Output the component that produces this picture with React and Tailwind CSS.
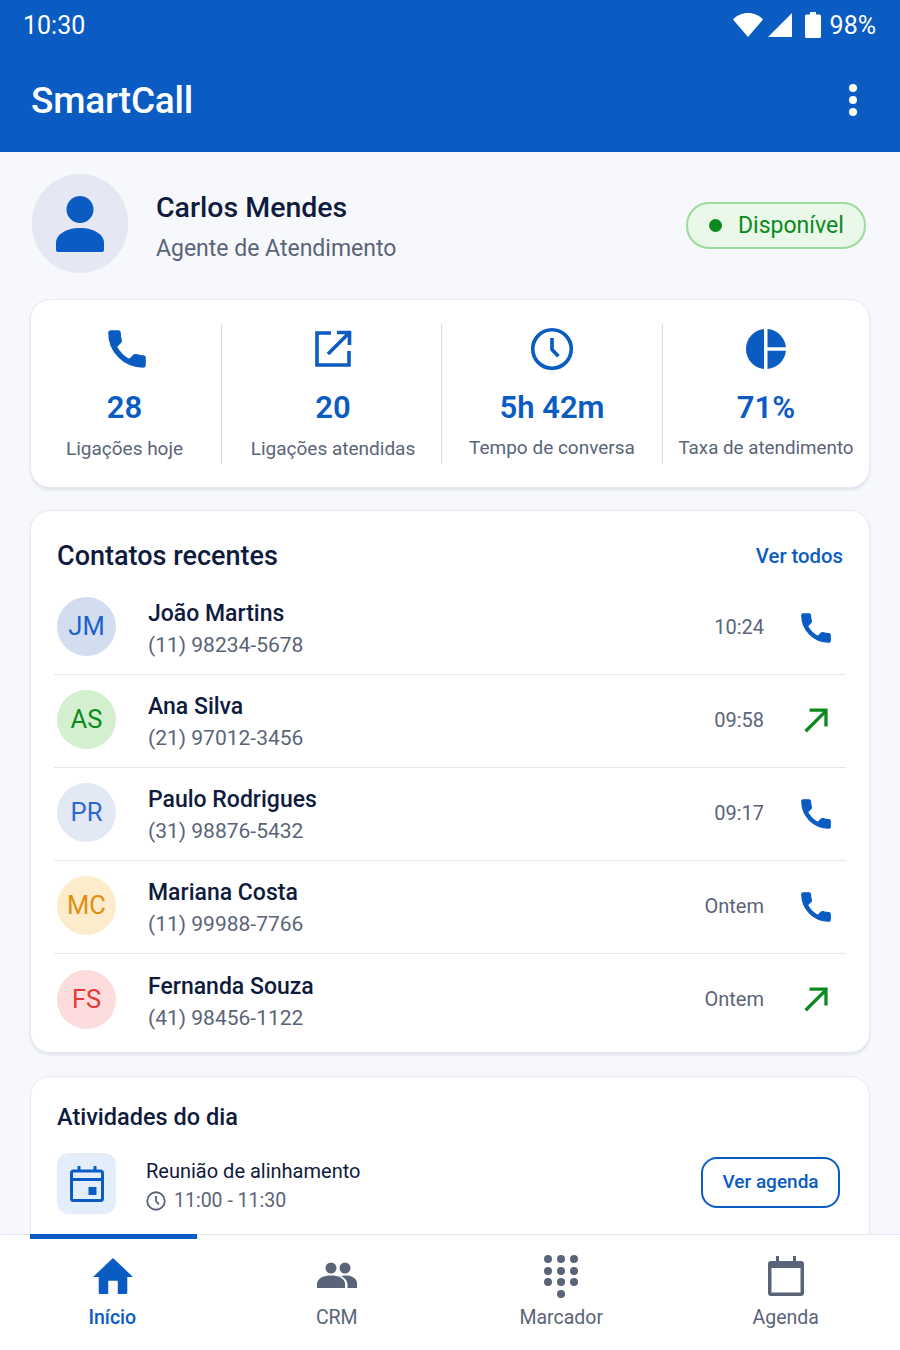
import React from "react";

const PHONE = "M6.62 10.79c1.44 2.83 3.76 5.14 6.59 6.59l2.2-2.2c.27-.27.67-.36 1.02-.24 1.12.37 2.33.57 3.57.57.55 0 1 .45 1 1V20c0 .55-.45 1-1 1-9.39 0-17-7.61-17-17 0-.55.45-1 1-1h3.5c.55 0 1 .45 1 1 0 1.25.2 2.45.57 3.57.11.35.03.74-.25 1.02l-2.2 2.2z";

const Phone = ({ className }) => (
  <svg viewBox="2.5 2.5 19 19" className={className} fill="currentColor" stroke="currentColor" strokeWidth="0.8" strokeLinejoin="round">
    <path d={PHONE} />
  </svg>
);

const Outgoing = ({ className }) => (
  <svg viewBox="0 0 30 30" className={className} fill="none" stroke="currentColor" strokeWidth="3.800">
    <path d="M3 28 26 5M7.500 3.500H26.500V22.500" />
  </svg>
);

const Clock = ({ className, sw = 2 }) => (
  <svg viewBox="0 0 24 24" className={className} fill="none" stroke="currentColor" strokeWidth={sw}>
    <circle cx="12" cy="12" r="10.500" />
    <path d="M12 6v6.300l3.500 3.700" />
  </svg>
);

const contacts = [
  { i: "JM", n: "João Martins", p: "(11) 98234-5678", t: "10:24", k: "call", bg: "bg-[#d2deef]", fg: "text-[#1b62c9]" },
  { i: "AS", n: "Ana Silva", p: "(21) 97012-3456", t: "09:58", k: "out", bg: "bg-[#d3efd0]", fg: "text-[#0b8a1e]" },
  { i: "PR", n: "Paulo Rodrigues", p: "(31) 98876-5432", t: "09:17", k: "call", bg: "bg-[#e3e8f5]", fg: "text-[#2e68cf]" },
  { i: "MC", n: "Mariana Costa", p: "(11) 99988-7766", t: "Ontem", k: "call", bg: "bg-[#fdeccb]", fg: "text-[#e0900f]" },
  { i: "FS", n: "Fernanda Souza", p: "(41) 98456-1122", t: "Ontem", k: "out", bg: "bg-[#fcdcdc]", fg: "text-[#e53935]" },
];

const stats = [
  {
    v: "28", l: "Ligações hoje", w: "w-[190px] pr-[3px]", ly: "mt-[8px]",
    icon: <Phone className="w-[38px] h-[38px] ml-[5px]" />,
  },
  {
    v: "20", l: "Ligações atendidas", w: "w-[220px] pl-[3px]", ly: "mt-[8px]",
    icon: (
      <svg viewBox="0 0 38 38" className="w-[38px] h-[38px]" fill="none" stroke="currentColor" strokeWidth="3.600">
        <path d="M17 3H3V35H35V21M14 24 35 3M23 2.500H35.500V15" />
      </svg>
    ),
  },
  {
    v: "5h 42m", l: "Tempo de conversa", w: "w-[221px]", ly: "mt-[7px]",
    icon: <Clock className="w-[44px] h-[44px]" sw={2} />,
  },
  {
    v: "71%", l: "Taxa de atendimento", w: "flex-1", ly: "mt-[7px]",
    icon: (
      <svg viewBox="0 0 40 40" className="w-[40px] h-[40px]" fill="currentColor">
        <path d="M18 0.100V40C7.800 39 0 30.400 0 20S7.800 1.100 18 0.100Z" />
        <path d="M21.500 0.100C31.300 0.900 39.100 8.700 39.900 18.300H21.500Z" />
        <path d="M21.500 21.700H39.900C39.100 31.300 31.300 39.100 21.500 39.900Z" />
      </svg>
    ),
  },
];

export default function App() {
  return (
    <div className="w-[900px] h-[1350px] flex flex-col overflow-hidden bg-[#f7f8fc] font-['Roboto',sans-serif]">
      <header className="h-[152px] shrink-0 bg-[#0a5cc2] text-white pl-[23px] pr-[24px] flex flex-col">
        <div className="h-[50px] flex items-center justify-between">
          <span className="text-[25px] leading-none">10:30</span>
          <div className="flex items-center">
            <svg viewBox="0 0 30 24" className="w-[30px] h-[24px]" fill="white">
              <path d="M15 24 0 6.500C3.500 2.500 9 0 15 0s11.500 2.500 15 6.500Z" />
            </svg>
            <svg viewBox="0 0 24 24" className="w-[24px] h-[24px] ml-[5px]" fill="white">
              <path d="M0 24 24 0V24Z" />
            </svg>
            <svg viewBox="0 0 16 26" className="w-[16px] h-[26px] ml-[13px]" fill="white">
              <path d="M5 0h6v2.500h3.500a1.500 1.500 0 0 1 1.500 1.500v20.500a1.500 1.500 0 0 1-1.500 1.500h-13A1.500 1.500 0 0 1 0 24.500V4a1.500 1.500 0 0 1 1.500-1.500H5Z" />
            </svg>
            <span className="text-[25px] leading-none ml-[9px]">98%</span>
          </div>
        </div>
        <div className="flex-1 flex items-start justify-between pt-[26px] pl-[8px] pr-[19px]">
          <span className="text-[37px] leading-[50px] font-medium tracking-[-0.2px]">SmartCall</span>
          <div className="flex flex-col gap-[4px] mt-[8px]">
            <span className="w-[8px] h-[8px] rounded-full bg-white" />
            <span className="w-[8px] h-[8px] rounded-full bg-white" />
            <span className="w-[8px] h-[8px] rounded-full bg-white" />
          </div>
        </div>
      </header>

      <main className="flex-1 min-h-0 overflow-hidden px-[30px]">
        <section className="flex items-center h-[147px] pl-[2px] pr-[4px]">
          <div className="w-[96px] h-[99px] -mt-[4px] rounded-full bg-[#e5e7f2] flex items-center justify-center">
            <svg viewBox="0 0 48 56" className="w-[48px] h-[56px]" fill="#0a5cc2">
              <circle cx="24" cy="13.500" r="13.500" />
              <path d="M0 54V47C0 38 11 32 24 32s24 6 24 15v7Q48 56 46 56H2Q0 56 0 54Z" />
            </svg>
          </div>
          <div className="ml-[28px] flex-1 pt-[2px]">
            <div className="text-[28.500px] leading-[36px] font-medium text-[#0f1b3d]">Carlos Mendes</div>
            <div className="text-[23px] leading-[30px] text-[#5a6478] mt-[8px]">Agente de Atendimento</div>
          </div>
          <div className="w-[180px] h-[47px] rounded-[23px] border-2 border-[#9bdc9c] bg-[#e9f8e8] flex items-center pl-[21px] gap-[16px]">
            <span className="w-[13px] h-[13px] rounded-full bg-[#0b8a1e]" />
            <span className="text-[23px] text-[#0b8a1e] leading-none">Disponível</span>
          </div>
        </section>

        <section className="h-[189px] rounded-[20px] bg-white border border-[#e6e9f3] shadow-[0_2px_3px_rgba(30,50,100,0.1)] flex items-center">
          {stats.map((s, idx) => (
            <div key={s.v} className={`${s.w} h-[140px] flex flex-col items-center text-center ${idx > 0 ? "border-l border-[#d5d9e4]" : ""}`}>
              <div className="h-[50px] shrink-0 flex items-center justify-center text-[#0a5cc2]">{s.icon}</div>
              <div className="text-[31px] leading-[40px] shrink-0 font-semibold text-[#0a5cc2] mt-[14px]">{s.v}</div>
              <div className={`${idx === 3 ? "text-[18.800px]" : "text-[19px]"} leading-[26px] shrink-0 text-[#5a6478] whitespace-nowrap ${s.ly}`}>{s.l}</div>
            </div>
          ))}
        </section>

        <section className="mt-[22px] h-[543px] rounded-[20px] bg-white border border-[#e6e9f3] shadow-[0_2px_3px_rgba(30,50,100,0.1)] px-[23px]">
          <div className="flex items-center justify-between h-[71px] pt-[20px] px-[3px] pb-[1px]">
            <h2 className="text-[27px] font-medium text-[#0f1b3d] leading-none">Contatos recentes</h2>
            <span className="text-[20.300px] font-medium text-[#0a5cc2] leading-none">Ver todos</span>
          </div>
          {contacts.map((c, idx) => (
            <div key={c.i} className={`h-[93px] flex items-center pl-[3px] pb-[3px] ${idx < 4 ? "border-b border-[#e4e7f0]" : ""}`}>
              <div className={`w-[59px] h-[59px] rounded-full flex items-center justify-center text-[25.500px] ${c.bg} ${c.fg}`}>{c.i}</div>
              <div className="ml-[32px] flex-1 pt-[6px]">
                <div className="text-[23px] leading-[30px] font-medium text-[#0f1b3d]">{c.n}</div>
                <div className="text-[21px] leading-[30px] text-[#5a6478] mt-[1px]">{c.p}</div>
              </div>
              <span className="text-[20px] text-[#5a6478]">{c.t}</span>
              <div className="w-[82px] flex justify-center pl-[22px]">
                {c.k === "call" ? (
                  <Phone className="w-[30px] h-[30px] mt-[3px] text-[#0a5cc2]" />
                ) : (
                  <Outgoing className="w-[26px] h-[26px] text-[#0b8a1e]" />
                )}
              </div>
            </div>
          ))}
        </section>

        <section className="mt-[23px] h-[240px] rounded-[20px] bg-white border border-[#e6e9f3] px-[26px]">
          <h2 className="text-[23.500px] font-medium text-[#0f1b3d] leading-none mt-[29px]">Atividades do dia</h2>
          <div className="flex items-center mt-[23px] pr-[3px]">
            <div className="w-[59px] h-[61px] rounded-[12px] bg-[#e4eefb] flex items-center justify-center">
              <svg viewBox="0 0 34 36" className="w-[34px] h-[36px]" fill="none" stroke="#0a5cc2" strokeWidth="3">
                <rect x="1.500" y="5" width="31" height="29.500" rx="2" />
                <path d="M1.500 13.500h31M9 0v6M25 0v6" />
                <rect x="18.500" y="21" width="8" height="8" fill="#0a5cc2" stroke="none" />
              </svg>
            </div>
            <div className="ml-[30px] flex-1 pt-[4px]">
              <div className="text-[20px] leading-[28px] text-[#0f1b3d] font-normal">Reunião de alinhamento</div>
              <div className="flex items-center mt-[2px] text-[19.500px] leading-[28px] text-[#5a6478]">
                <Clock className="w-[20px] h-[20px] mr-[8px]" sw={2.200} />
                11:00 - 11:30
              </div>
            </div>
            <div className="w-[139px] h-[51px] -mt-[3px] rounded-[16px] border-2 border-[#0a5cc2] flex items-center justify-center text-[19px] font-medium text-[#0a5cc2]">Ver agenda</div>
          </div>
        </section>
      </main>

      <nav className="relative h-[116px] shrink-0 bg-white border-t border-[#e2e5ef] grid grid-cols-4 pr-[2px]">
        <span className="absolute left-[30px] top-[-1px] w-[167px] h-[5px] bg-[#0a5cc2]" />
        <div className="flex flex-col items-center text-[#0a5cc2]">
          <div className="h-[61px] flex items-center justify-center pt-[20px]">
            <svg viewBox="0 0 42 38" className="w-[40px] h-[38px] ml-[2px]" fill="currentColor">
              <path d="M21 0 42 20H36V36.500Q36 38 34.500 38H26V24H16V38H7.500Q6 38 6 36.500V20H0Z" />
            </svg>
          </div>
          <span className="text-[19.500px] font-medium mt-[8px] leading-[28px]">Início</span>
        </div>
        <div className="flex flex-col items-center text-[#5a6478]">
          <div className="h-[61px] flex items-center justify-center pt-[18px]">
            <svg viewBox="0 0 40 26" className="w-[40px] h-[26px]" fill="currentColor">
              <circle cx="14" cy="6" r="5.500" />
              <circle cx="28" cy="6" r="5.500" />
              <path d="M0 26V22C0 16 7 13.500 14 13.500S28 16 28 22V26Z" />
              <path d="M24 14.200C26 13.700 27 13.500 29 13.500 34 13.500 40 16 40 21V26H30.500V22C30.500 19 28 16 24 14.200Z" />
            </svg>
          </div>
          <span className="text-[19.500px] mt-[8px] leading-[28px]">CRM</span>
        </div>
        <div className="flex flex-col items-center text-[#5a6478]">
          <div className="h-[61px] flex items-center justify-center pt-[22px]">
            <svg viewBox="0 0 34 43" className="w-[34px] h-[43px] shrink-0" fill="currentColor">
              {[4, 17, 30].flatMap((x) => [4, 16, 27].map((y) => <circle key={`${x}-${y}`} cx={x} cy={y} r="4" />))}
              <circle cx="17" cy="39" r="4" />
            </svg>
          </div>
          <span className="text-[19.500px] mt-[8px] leading-[28px]">Marcador</span>
        </div>
        <div className="flex flex-col items-center text-[#5a6478]">
          <div className="h-[61px] flex items-center justify-center pt-[20px]">
            <svg viewBox="0 0 36 40" className="w-[36px] h-[40px]" fill="none">
              <path d="M8 0h3v5h14V0h3v5h5a3 3 0 0 1 3 3v29a3 3 0 0 1-3 3H3a3 3 0 0 1-3-3V8a3 3 0 0 1 3-3h5Z" fill="currentColor" />
              <rect x="3.500" y="12" width="29" height="24.500" fill="white" />
            </svg>
          </div>
          <span className="text-[19.500px] mt-[8px] leading-[28px]">Agenda</span>
        </div>
      </nav>
    </div>
  );
}
